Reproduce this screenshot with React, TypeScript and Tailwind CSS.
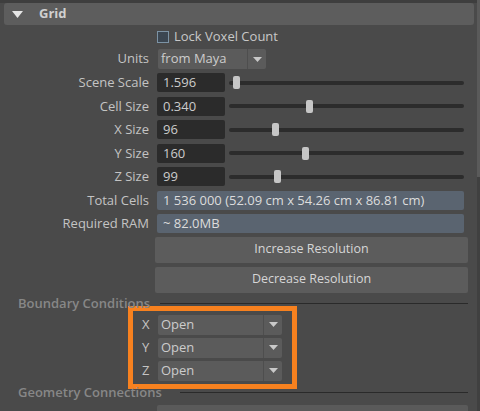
import React from "react";

const FONT = { fontFamily: '"Open Sans", "Noto Sans", sans-serif' };

function Caret() {
  return (
    <svg width="9" height="5" viewBox="0 0 9 5">
      <path d="M0 0 H9 L4.5 5 Z" fill="#c9c9c9" />
    </svg>
  );
}

function Label({ children }: { children: React.ReactNode }) {
  return (
    <div className="w-[149px] shrink-0 text-right text-[13px] text-[#c4c4c4]">
      {children}
    </div>
  );
}

function Dropdown({ value, width }: { value: string; width: string }) {
  return (
    <div className={`flex h-[20px] ${width} items-center rounded-[2px] bg-[#5b5b5b]`}>
      <span className="flex-1 pl-[3px] text-[13px] text-[#cccccc]">{value}</span>
      <div className="flex h-full w-[19px] items-center justify-center border-l border-[#4e4e4e]">
        <Caret />
      </div>
    </div>
  );
}

function SliderRow({ label, value, handle }: { label: string; value: string; handle: number }) {
  return (
    <div className="flex h-[23.5px] items-center">
      <Label>{label}</Label>
      <div className="ml-[8px] flex h-[19px] w-[68px] items-center rounded-[2px] bg-[#2b2b2b] pl-[6px] text-[13px] text-[#cccccc]">
        {value}
      </div>
      <div className="relative ml-[4px] flex h-[19px] w-[235px] items-center">
        <div className="h-[4px] w-full rounded-full bg-[#2c2c2c]" />
        <div
          className="absolute top-[3px] h-[13px] w-[7px] rounded-[2px] bg-[#c6c6c6]"
          style={{ left: handle }}
        />
      </div>
    </div>
  );
}

function InfoRow({ label, value }: { label: string; value: string }) {
  return (
    <div className="flex h-[23.5px] items-center">
      <Label>{label}</Label>
      <div className="ml-[8px] flex h-[19px] w-[307px] items-center rounded-[2px] bg-[#5a6470] pl-[6px] text-[13px] text-[#dcdcdc]">
        {value}
      </div>
    </div>
  );
}

function Section({ title, lineStart }: { title: string; lineStart: string }) {
  return (
    <div className="flex h-[14px] items-center">
      <span className="pl-[18px] text-[13px] font-semibold text-[#878787]">{title}</span>
      <div className={`${lineStart} h-[2px] flex-1 border-t border-[#2a2a2a] border-b-[#545454]`} />
    </div>
  );
}

export default function App() {
  return (
    <div className="flex h-[411px] w-[480px] items-start overflow-hidden bg-[#484848]" style={FONT}>
      <div className="h-[411px] w-[477px] bg-[#4a4a4a]">
        <div className="h-[3px] bg-[#3e3e3e]" />
        <div className="ml-[4px] flex h-[22px] w-[470px] items-center rounded-[3px] bg-[#5d5d5d]">
          <svg className="ml-[8px]" width="11" height="7" viewBox="0 0 11 7">
            <path d="M0 0 H11 L5.5 7 Z" fill="#e6e6e6" />
          </svg>
          <span className="ml-[16px] text-[13px] font-bold text-[#d0d0d0]">Grid</span>
        </div>
        <div className="w-[468px]">
          <div className="mt-[6px] flex h-[12px] items-center pl-[157px]">
            <div className="h-[12px] w-[12px] border border-[#7c93a5] bg-[#3b4651]" />
            <span className="ml-[5px] text-[13px] text-[#c8c8c8]">Lock Voxel Count</span>
          </div>
          <div className="mt-[6px] flex h-[20px] items-center">
            <Label>Units</Label>
            <div className="ml-[9px]">
              <Dropdown value="from Maya" width="w-[108px]" />
            </div>
          </div>
          <div className="mt-[2px]">
            <SliderRow label="Scene Scale" value="1.596" handle={4} />
            <SliderRow label="Cell Size" value="0.340" handle={77} />
            <SliderRow label="X Size" value="96" handle={43} />
            <SliderRow label="Y Size" value="160" handle={73} />
            <SliderRow label="Z Size" value="99" handle={45} />
            <InfoRow label="Total Cells" value="1 536 000 (52.09 cm x 54.26 cm x 86.81 cm)" />
            <InfoRow label="Required RAM" value="~ 82.0MB" />
          </div>
          <div className="ml-[155px] mt-[1px] flex flex-col gap-[4px]">
            <div className="flex h-[26px] items-center justify-center rounded-[2px] bg-[#5c5c5c] text-[12.5px] text-[#d6d6d6]">
              Increase Resolution
            </div>
            <div className="flex h-[26px] items-center justify-center rounded-[2px] bg-[#5c5c5c] text-[12.5px] text-[#d6d6d6]">
              Decrease Resolution
            </div>
          </div>
          <div className="mt-[4px]">
            <Section title="Boundary Conditions" lineStart="ml-[10px]" />
          </div>
          <div className="ml-[128px] mt-[-5px] flex w-[169px] flex-col gap-[3px] border-[5px] border-[#f7811f] pb-[3px] pl-[9px] pt-[4px]">
            {["X", "Y", "Z"].map((a) => (
              <div key={a} className="flex h-[20px] items-center">
                <span className="w-[16px] text-[13px] text-[#c4c4c4]">{a}</span>
                <Dropdown value="Open" width="w-[124px]" />
              </div>
            ))}
          </div>
          <div className="mt-[-3px]">
            <Section title="Geometry Connections" lineStart="ml-[18px]" />
          </div>
          <div className="ml-[157px] mt-[5px] h-[20px] rounded-[2px] bg-[#5a5a5a]" />
        </div>
      </div>
      <div className="flex h-[411px] w-[3px] flex-col bg-[#404040]">
        <div className="h-[177px] bg-[#5a5a5a]" />
      </div>
    </div>
  );
}
